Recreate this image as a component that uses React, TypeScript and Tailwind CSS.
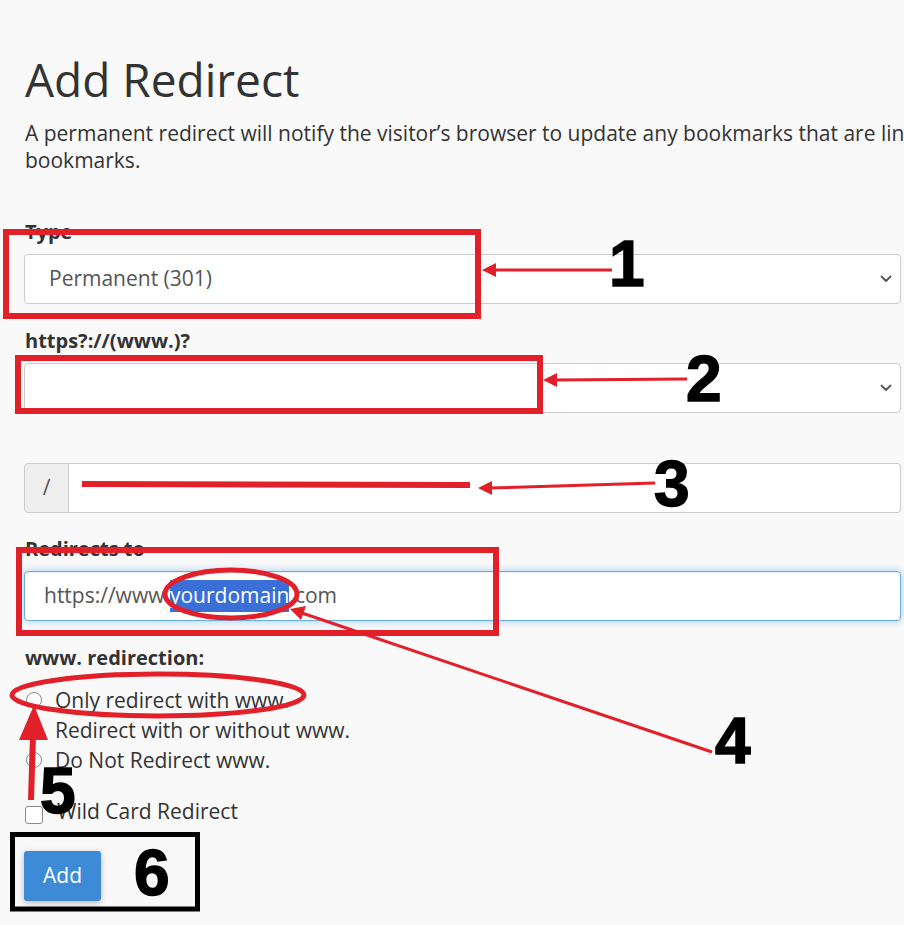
import React from "react";

const Chevron = () => (
  <svg width="12" height="8" viewBox="0 0 12 8" className="shrink-0">
    <path d="M1.5 1.5 L6 6 L10.5 1.5" fill="none" stroke="#555" strokeWidth="1.8" strokeLinecap="round" strokeLinejoin="round" />
  </svg>
);

const Radio = ({ label }: { label: string }) => (
  <div className="flex items-center h-[30px]">
    <span className="ml-[2px] w-[16px] h-[16px] rounded-full border border-[#8a8a8a] bg-white shrink-0" />
    <span className="ml-[13px] leading-[30px]">{label}</span>
  </div>
);

const Num = ({ n, left, top }: { n: string; left: number; top: number }) => (
  <div
    className="absolute font-['Liberation_Sans',Arial,sans-serif] font-bold text-[64px] leading-[64px] text-black [-webkit-text-stroke:1.5px_black]"
    style={{ left, top }}
  >
    {n}
  </div>
);

export default function App() {
  const red = "#e2202a";
  return (
    <div className="relative w-[904px] h-[925px] overflow-hidden bg-[#f9f9f9] font-['Open_Sans',sans-serif] text-[#333]">
      <div className="pl-[24px] pr-[3px] pt-[55px]">
        <h1 className="text-[46px] leading-[49px] font-normal text-[#333] pl-[1px]">Add Redirect</h1>
        <p className="mt-[16px] text-[21px] leading-[27px] whitespace-nowrap pl-[1px]">
          A permanent redirect will notify the visitor’s browser to update any bookmarks that are linked to the redirected page. A temporary redirect will not update the visitor’s
          <br />
          bookmarks.
        </p>

        <div className="mt-[44px]">
          <div className="text-[20px] leading-[27px] font-bold mb-[9px] pl-[1px]">Type</div>
          <div className="h-[50px] bg-white border border-[#ccc] rounded-[4px] flex items-center justify-between pl-[24px] pr-[8px] text-[21px] text-[#555]">
            <span>Permanent (301)</span>
            <Chevron />
          </div>
        </div>

        <div className="mt-[23px]">
          <div className="text-[20px] leading-[27px] font-bold mb-[9px] pl-[1px]">https?://(www.)?</div>
          <div className="h-[50px] bg-white border border-[#ccc] rounded-[4px] flex items-center justify-end pr-[8px]">
            <Chevron />
          </div>
        </div>

        <div className="mt-[50px] h-[50px] flex">
          <div className="w-[45px] bg-[#eee] border border-[#ccc] rounded-l-[4px] flex items-center justify-center text-[21px] text-[#555]">/</div>
          <div className="flex-1 bg-white border border-l-0 border-[#ccc] rounded-r-[4px]" />
        </div>

        <div className="mt-[22px]">
          <div className="text-[20px] leading-[27px] font-bold mb-[9px] pl-[1px]">Redirects to</div>
          <div className="h-[50px] bg-white border border-[#66afe9] rounded-[4px] shadow-[inset_0_1px_1px_rgba(0,0,0,0.075),0_0_8px_rgba(102,175,233,0.6)] flex items-center pl-[19px] text-[21px] text-[#555]">
            <span>https://www.</span>
            <span className="bg-[#3a6fd8] text-white">yourdomain</span>
            <span>.com</span>
          </div>
        </div>

        <div className="mt-[23px] text-[20px] leading-[27px] font-bold pl-[1px]">www. redirection:</div>
        <div className="mt-[14px] text-[21px]">
          <Radio label="Only redirect with www." />
          <Radio label="Redirect with or without www." />
          <Radio label="Do Not Redirect www." />
        </div>

        <div className="mt-[22px] flex items-center h-[30px] text-[21px]">
          <span className="ml-[1px] w-[18px] h-[18px] rounded-[3px] border border-[#8a8a8a] bg-white shrink-0 mt-[6px]" />
          <span className="ml-[14px]">Wild Card Redirect</span>
        </div>

        <button className="mt-[24px] w-[77px] h-[50px] bg-[#3d8bd6] text-white text-[21px] rounded-[3px] shadow-[0_2px_6px_rgba(0,0,0,0.25)]">Add</button>
      </div>

      <svg className="absolute inset-0 pointer-events-none" width="904" height="925" viewBox="0 0 904 925">
        {/* box 1 */}
        <rect x="6" y="232" width="472" height="84" fill="none" stroke={red} strokeWidth="6" />
        <line x1="612" y1="270" x2="494" y2="270" stroke={red} strokeWidth="3" />
        <polygon points="482,270 496,263 496,277" fill={red} />
        {/* box 2 */}
        <rect x="18" y="358" width="522" height="53" fill="none" stroke={red} strokeWidth="6" />
        <line x1="687" y1="379" x2="555" y2="380" stroke={red} strokeWidth="3" />
        <polygon points="543,380 557,373 557,387" fill={red} />
        {/* line 3 */}
        <line x1="82" y1="484" x2="470" y2="485" stroke={red} strokeWidth="6" />
        <line x1="655" y1="483" x2="490" y2="488" stroke={red} strokeWidth="3" />
        <polygon points="478,488 492,481 492,495" fill={red} />
        {/* box 4 */}
        <rect x="19" y="550" width="477" height="83" fill="none" stroke={red} strokeWidth="6" />
        <ellipse cx="231" cy="594" rx="66" ry="24" fill="none" stroke={red} strokeWidth="5" />
        <line x1="712" y1="752" x2="302" y2="613" stroke={red} strokeWidth="3" />
        <polygon points="290,609 306,606 301,620" fill={red} />
        {/* ellipse 5 */}
        <ellipse cx="158" cy="695" rx="146" ry="21" fill="none" stroke={red} strokeWidth="5" />
        <line x1="31" y1="800" x2="33" y2="736" stroke={red} strokeWidth="6" />
        <polygon points="34,705 19,740 48,740" fill={red} />
        {/* box 6 */}
        <rect x="12.5" y="834.5" width="185" height="74.5" fill="none" stroke="#000" strokeWidth="5" />
      </svg>

      <Num n="1" left={609} top={232} />
      <Num n="2" left={686} top={347} />
      <Num n="3" left={654} top={452} />
      <Num n="4" left={715} top={709} />
      <Num n="5" left={40} top={759} />
      <Num n="6" left={134} top={841} />
    </div>
  );
}
